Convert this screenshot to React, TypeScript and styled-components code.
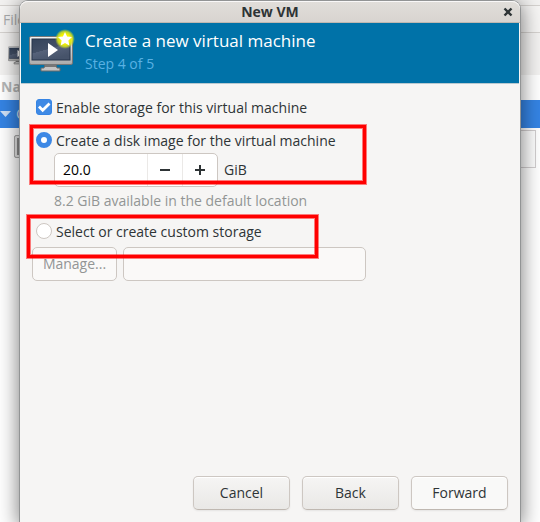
import React, { useState } from "react";
import styled, { createGlobalStyle, css } from "styled-components";

const GlobalStyle = createGlobalStyle`
  *, *::before, *::after { box-sizing: border-box; }
  body {
    margin: 0;
    background: #fcfcfc;
    color: #2e3436;
    font-family: "Open Sans", "Noto Sans", sans-serif;
    font-size: 14px;
    line-height: 20px;
  }
  button, input { font: inherit; color: inherit; }
`;

const Desktop = styled.main`
  position: relative;
  min-height: 100vh;
  overflow: hidden;
`;

/* Manager window behind the dialog */
const ManagerWindow = styled.div`
  position: absolute;
  inset: 0;
  display: flex;
  flex-direction: column;
  background: #fff;
  color: #a9abac;
`;

const ManagerTitle = styled.div`
  height: 6px;
  flex: none;
  display: flex;
  justify-content: center;
  align-items: flex-end;
  padding-bottom: 1px;
  overflow: hidden;
  background: #f3f2f1;
  border-bottom: 1px solid #d5d2cf;
  font-weight: 700;
  line-height: 16px;
  color: #8b8e8f;
`;

const MenuBar = styled.nav`
  height: 27px;
  flex: none;
  padding: 4px 3px;
  background: #f6f5f4;
  border-bottom: 1px solid #d5d2cf;
`;

const ToolBar = styled.div`
  height: 42px;
  flex: none;
  padding: 10px 8px;
  background: #f3f2f1;
`;

const ListHeader = styled.div`
  height: 25px;
  flex: none;
  padding: 2px 1px;
  font-weight: 700;
  color: #b4b6b6;
`;

const HostRow = styled.div`
  height: 28px;
  flex: none;
  display: flex;
  align-items: center;
  gap: 5px;
  background: #3584e4;
  color: #cfe1f7;
`;

const GuestRow = styled.div`
  height: 38px;
  flex: none;
  display: flex;
  justify-content: space-between;
  margin: 2px 4px 0 14px;
`;

const Graph = styled.div`
  width: 64px;
  border: 1px solid #d2cecf;
  background: #fdfdfd;
`;

const Thumb = styled.div`
  width: 24px;
  height: 23px;
  margin-top: 5px;
  border: 1px solid #aaa;
  border-radius: 2px;
  background: #8d8d8d;
  box-shadow: inset 0 0 0 2px #e6e6e6;
`;

/* Dialog */
const Dialog = styled.section`
  position: relative;
  display: flex;
  flex-direction: column;
  min-height: calc(100vh - 1px);
  margin: 1px 20px 0;
  background: #f6f5f4;
  border-radius: 8px 8px 0 0;
  box-shadow: 0 0 0 1px #929495, 0 3px 20px 2px rgba(0, 0, 0, 0.5);
`;

const TitleBar = styled.header`
  height: 22px;
  flex: none;
  display: grid;
  grid-template-columns: 24px 1fr 24px;
  align-items: center;
  border-radius: 8px 8px 0 0;
  background: linear-gradient(#e1deda, #d8d4d0);
  border-bottom: 1px solid #bfb8b1;
  box-shadow: inset 0 1px #f9f8f8;
`;

const WindowTitle = styled.h1`
  grid-column: 2;
  margin: 0;
  text-align: center;
  font-size: 14px;
  font-weight: 700;
`;

const CloseButton = styled.button`
  display: flex;
  justify-content: center;
  border: 0;
  padding: 0;
  background: none;
`;

const Banner = styled.div`
  height: 60px;
  flex: none;
  display: flex;
  gap: 8px;
  margin-right: 1px;
  margin-left: 1px;
  padding: 6px 8px;
  background: #0072a8;
  box-shadow: 0 1px #b9c9d0;
`;

const BannerTitle = styled.h2`
  margin: 0;
  font-size: 17px;
  line-height: 24px;
  font-weight: 400;
  color: #fff;
`;

const BannerStep = styled.p`
  margin: 0;
  line-height: 22px;
  color: #59b1e3;
`;

const Form = styled.form`
  flex: 1;
  display: flex;
  flex-direction: column;
  padding: 14px 12px 12px;
`;

const ChoiceRow = styled.label`
  display: flex;
  align-items: center;
  gap: 4px;
  height: 20px;
  padding-left: 4px;
`;

const ChoiceText = styled.span`
  padding-top: 2px;
`;

const Control = css`
  appearance: none;
  flex: none;
  width: 16px;
  height: 16px;
  margin: 0;
  border: 1px solid #cdc7c2;
  background: #fff;
`;

const CheckBox = styled.input.attrs({ type: "checkbox" })`
  ${Control}
  border-radius: 3px;
  &:checked {
    border-color: #3584e4;
    background: #3f8ae5;
  }
`;

const CheckHolder = styled.span`
  display: grid;
  > * { grid-area: 1 / 1; }
  > svg { pointer-events: none; }
  > input:not(:checked) + svg { visibility: hidden; }
`;

const Radio = styled.input.attrs({ type: "radio" })`
  ${Control}
  border-radius: 50%;
  &:checked {
    border: 5px solid #3d88e5;
  }
`;

const Highlighted = styled.div<{ $gap: number }>`
  position: relative;
  margin-top: ${(p) => p.$gap}px;
`;

const Highlight = styled.div<{ $top: number; $left: number; $width: number; $height: number }>`
  position: absolute;
  top: ${(p) => p.$top}px;
  left: ${(p) => p.$left}px;
  width: ${(p) => p.$width}px;
  height: ${(p) => p.$height}px;
  border: 3px solid #ff0000;
  box-shadow: 0 0 0 1px rgba(255, 0, 0, 0.5), inset 0 0 0 1px rgba(255, 0, 0, 0.5);
  pointer-events: none;
  z-index: 1;
`;

const SizeRow = styled.div`
  display: flex;
  align-items: center;
  gap: 6px;
  margin: 3px 0 0 22px;
`;

const Spinner = styled.div`
  display: flex;
  width: 164px;
  height: 34px;
  border: 1px solid #cdc7c2;
  border-radius: 5px;
  background: #fff;
  overflow: hidden;
`;

const SizeInput = styled.input`
  flex: 1;
  min-width: 0;
  border: 0;
  padding: 0 8px;
  background: none;
  color: #000;
  outline: none;
`;

const StepButton = styled.button`
  width: 35px;
  border: 0;
  border-left: 1px solid #ebe9e7;
  padding: 0;
  background: none;
  display: grid;
  place-items: center;
`;

const Hint = styled.p`
  margin: 4px 0 0 22px;
  color: #929595;
`;

const PathRow = styled.div`
  display: flex;
  gap: 6px;
  margin-top: 6px;
`;

const Button = styled.button<{ $plain?: boolean }>`
  width: 97px;
  height: 34px;
  border: 1px solid #cdc7c2;
  border-bottom-color: #bfb8b1;
  border-radius: 5px;
  padding: 0;
  background: ${(p) => (p.$plain ? "#f9f9f8" : "linear-gradient(#f6f5f4, #e9e8e6)")};
  box-shadow: inset 0 1px #fff, 0 1px 2px rgba(0, 0, 0, 0.07);
`;

const ManageButton = styled(Button)`
  width: 85px;
  color: #929595;
  background: #faf9f8;
  border-color: #cdc7c2;
  box-shadow: none;
`;

const PathInput = styled.input`
  width: 243px;
  height: 34px;
  border: 1px solid #cdc7c2;
  border-radius: 5px;
  padding: 0 8px;
  background: #faf9f8;
`;

const Actions = styled.footer`
  display: flex;
  justify-content: flex-end;
  gap: 12px;
  margin-top: auto;
`;

function MonitorIcon({ width }: { width: number }) {
  return (
    <svg width={width} height={(width * 44) / 48} viewBox="0 0 48 44" aria-hidden="true">
      <defs>
        <linearGradient id="screen" x1="0" y1="0" x2="0.5" y2="1">
          <stop offset="0" stopColor="#35445b" />
          <stop offset="0.55" stopColor="#435067" />
          <stop offset="0.56" stopColor="#56627a" />
          <stop offset="1" stopColor="#46536a" />
        </linearGradient>
        <linearGradient id="frame" x1="0" y1="0" x2="0" y2="1">
          <stop offset="0" stopColor="#f5f5f5" />
          <stop offset="1" stopColor="#aaa" />
        </linearGradient>
        <radialGradient id="glow">
          <stop offset="0.5" stopColor="#f4f400" />
          <stop offset="0.75" stopColor="#d8e41c" stopOpacity="0.85" />
          <stop offset="1" stopColor="#c8dc20" stopOpacity="0" />
        </radialGradient>
      </defs>
      <path d="M16 36h11l1 3h3v3H12v-3h3z" fill="#c4c4c4" stroke="#686868" />
      <path d="M16 36h11v2H16z" fill="#777" />
      <rect x="0.500" y="7.500" width="43" height="28" rx="1.500" fill="url(#frame)" stroke="#777" />
      <rect x="3" y="10" width="38" height="21" fill="url(#screen)" stroke="#27354b" />
      <path d="M19 14v14l10-7z" fill="#fff" />
      <circle cx="36" cy="10" r="10" fill="url(#glow)" />
      <path d="M36 3l2.100 4.500 4.900.6-3.600 3.400.9 4.900-4.300-2.400-4.300 2.400.9-4.900-3.600-3.400 4.900-.6z" fill="#fff" />
    </svg>
  );
}

export default function App() {
  const [enabled, setEnabled] = useState(true);
  const [mode, setMode] = useState("image");
  const [size, setSize] = useState("20.0");
  const [path, setPath] = useState("");
  const custom = mode === "custom";
  const step = (amount: number) =>
    setSize((value) => Math.max(0, (parseFloat(value) || 0) + amount).toFixed(1));

  return (
    <>
      <GlobalStyle />
      <Desktop>
        <ManagerWindow aria-hidden="true">
          <ManagerTitle>Virtual Machine Manager</ManagerTitle>
          <MenuBar>File</MenuBar>
          <ToolBar><MonitorIcon width={24} /></ToolBar>
          <ListHeader>Name</ListHeader>
          <HostRow>
            <svg width="11" height="6" viewBox="0 0 11 6"><path d="M0 0h11L5.500 6z" fill="#cfe1f7" /></svg>
            QEMU/KVM
          </HostRow>
          <GuestRow><Thumb /><Graph /></GuestRow>
        </ManagerWindow>

        <Dialog role="dialog" aria-labelledby="dialog-title">
          <TitleBar>
            <WindowTitle id="dialog-title">New VM</WindowTitle>
            <CloseButton type="button" aria-label="Close">
              <svg width="10" height="10" viewBox="0 0 10 10"><path d="M1.500 1.500l7 7m0-7l-7 7" stroke="#2e3436" strokeWidth="2.400" /></svg>
            </CloseButton>
          </TitleBar>
          <Banner>
            <MonitorIcon width={48} />
            <div>
              <BannerTitle>Create a new virtual machine</BannerTitle>
              <BannerStep>Step 4 of 5</BannerStep>
            </div>
          </Banner>

          <Form onSubmit={(e) => e.preventDefault()}>
            <ChoiceRow>
              <CheckHolder>
                <CheckBox checked={enabled} onChange={(e) => setEnabled(e.target.checked)} />
                <svg width="16" height="16" viewBox="0 0 16 16"><path d="M3 7.500l3.700 3.700L13.500 4.500" fill="none" stroke="#fff" strokeWidth="2.800" /></svg>
              </CheckHolder>
              <ChoiceText>Enable storage for this virtual machine</ChoiceText>
            </ChoiceRow>

            <Highlighted $gap={13}>
              <Highlight $top={-5} $left={-2} $width={336} $height={59} />
              <ChoiceRow>
                <Radio name="storage" checked={!custom} onChange={() => setMode("image")} />
                <ChoiceText>Create a disk image for the virtual machine</ChoiceText>
              </ChoiceRow>
              <SizeRow>
                <Spinner>
                  <SizeInput aria-label="Disk size in GiB" value={size} onChange={(e) => setSize(e.target.value)} />
                  <StepButton type="button" aria-label="Decrease" onClick={() => step(-1)}>
                    <svg width="10" height="10" viewBox="0 0 10 10"><path d="M0 5h10" stroke="#2e3436" strokeWidth="2" /></svg>
                  </StepButton>
                  <StepButton type="button" aria-label="Increase" onClick={() => step(1)}>
                    <svg width="10" height="10" viewBox="0 0 10 10"><path d="M0 5h10M5 0v10" stroke="#2e3436" strokeWidth="2" /></svg>
                  </StepButton>
                </Spinner>
                GiB
              </SizeRow>
            </Highlighted>
            <Hint>8.2 GiB available in the default location</Hint>

            <Highlighted $gap={10}>
              <Highlight $top={-6} $left={-5} $width={291} $height={43} />
              <ChoiceRow>
                <Radio name="storage" checked={custom} onChange={() => setMode("custom")} />
                <ChoiceText>Select or create custom storage</ChoiceText>
              </ChoiceRow>
              <PathRow>
                <ManageButton type="button" disabled={!custom}>Manage...</ManageButton>
                <PathInput aria-label="Storage path" disabled={!custom} value={path} onChange={(e) => setPath(e.target.value)} />
              </PathRow>
            </Highlighted>

            <Actions>
              <Button type="button">Cancel</Button>
              <Button type="button">Back</Button>
              <Button type="submit" $plain>Forward</Button>
            </Actions>
          </Form>
        </Dialog>
      </Desktop>
    </>
  );
}
